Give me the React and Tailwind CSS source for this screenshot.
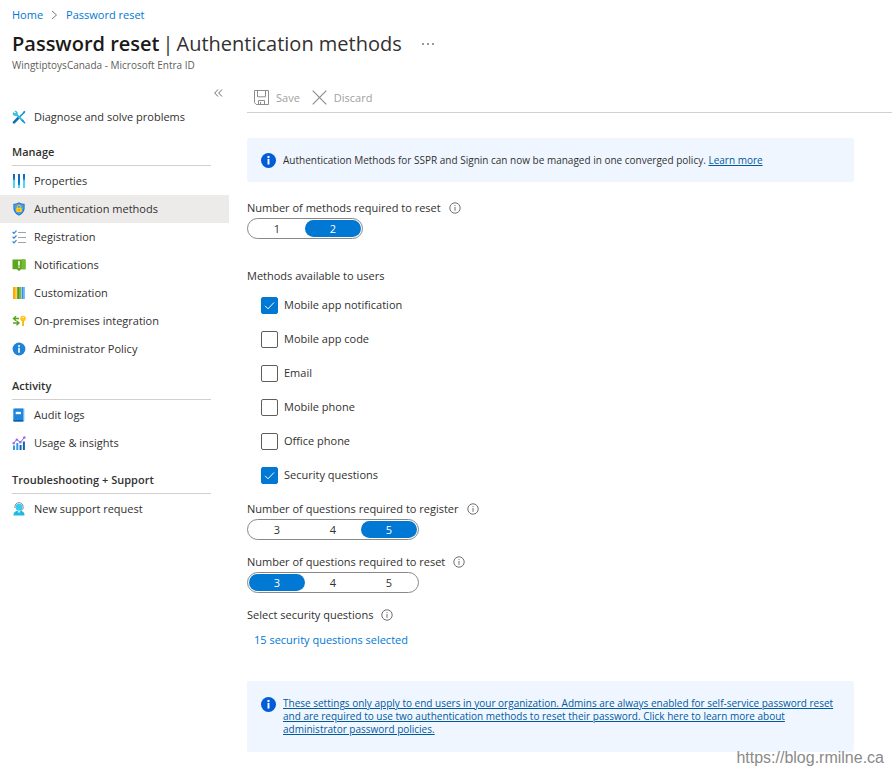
import React, { useState } from 'react';

const DiagnoseIcon = () => (
  <svg viewBox="0 0 14 14" className="size-[14px] shrink-0" fill="none">
    <path d="M12.4 2.2 6.9 7.6" stroke="#1b93c9" strokeWidth="1.5" strokeLinecap="round" />
    <path d="m11.4 1.6 2.1-1-.8 2.1-1 .7-1-1z" fill="#1b93c9" />
    <path d="M6.6 7.6 2 12.3" stroke="#0f6db5" strokeWidth="2.6" strokeLinecap="round" />
    <path d="m4.2 4.2 7.4 7.4" stroke="#32bedd" strokeWidth="2" />
    <path d="M1.3 1.9 3 3.5l.9-.9L2.4.9c1.500-.6 3.400.5 3.300 2.500 0 1.600-2.300 3.100-3.900 2.200C.6 4.900.6 3 1.300 1.900Z" fill="#32bedd" />
    <path d="m10.3 9.3 2.9 2.9c.6.7-.4 1.7-1.1 1.1l-2.900-2.900z" fill="#1490df" />
  </svg>
);

const PropertiesIcon = () => (
  <svg viewBox="0 0 14 14" className="size-[14px] shrink-0">
    <path d="M1 0h2v4H1zM6 0h2v9H6zM11 0h2v4h-2z" fill="#0f6cbd" />
    <path d="M1 5h2v9H1zM6 11h2v3H6zM11 5h2v9h-2z" fill="#50d5f5" />
    <path d="M1 4h2v2H1zM6 9h2v2H6zM11 4h2v2h-2z" fill="#1683d8" />
  </svg>
);

const ShieldIcon = () => (
  <svg viewBox="0 0 14 14" className="size-[14px] shrink-0">
    <path d="M7 .3c1.8 1.1 3.5 1.4 5.6 1.5v4.5c0 3.7-2.8 5.9-5.6 7.4-2.8-1.500-5.600-3.700-5.600-7.400V1.800C3.500 1.700 5.200 1.400 7 .3Z" fill="#1670c9" />
    <path d="M7 1.300c1.500.8 2.900 1.200 4.700 1.300v3.700c0 3.200-2.400 5.100-4.700 6.400-2.300-1.300-4.700-3.200-4.700-6.400V2.600c1.800-.1 3.200-.5 4.700-1.300Z" fill="#4a9deb" />
    <path d="M5.300 6V4.800a1.700 1.700 0 0 1 3.400 0V6" fill="none" stroke="#f5c518" strokeWidth="1" />
    <rect x="4.2" y="5.8" width="5.6" height="4.2" rx=".5" fill="#ffca1a" />
    <path d="M6.700 7h.6v1.700h-.6z" fill="#a67a00" />
  </svg>
);

const RegistrationIcon = () => (
  <svg viewBox="0 0 14 14" className="size-[14px] shrink-0" fill="none">
    <path d="M6 2.500h8M6 7.500h8M6 12.500h8" stroke="#a3a3a3" strokeWidth="1.2" />
    <path d="m.6 2 1.400 1.300L4.500.7M.6 6.800 2 8.100l2.500-2.600M.6 11.500 2 12.800l2.500-2.600" stroke="#2f86d6" strokeWidth="1.2" />
  </svg>
);

const NotificationsIcon = () => (
  <svg viewBox="0 0 14 14" className="size-[14px] shrink-0">
    <path d="M.5 1.500h13v9.800H8.900L7 13.300l-1.900-2H.5z" fill="#5ea51f" />
    <path d="M9.500 1.500h4v9.800h-4z" fill="#74bb2d" />
    <path d="M6.200 3h1.600v4.600H6.200zM6.200 8.400h1.600v1.400H6.200z" fill="#fff" />
  </svg>
);

const CustomizationIcon = () => (
  <svg viewBox="0 0 14 14" className="size-[14px] shrink-0">
    <path d="M1 1h3.500v12H1z" fill="#f8a90b" />
    <path d="M3 1h1.500v12H3z" fill="#ffc62b" />
    <path d="M5.200 1h3.500v12H5.200z" fill="#4c9919" />
    <path d="M7 1h1.700v12H7z" fill="#7cb82f" />
    <path d="M9.500 1H13v12H9.500z" fill="#3590e8" />
    <path d="M11.200 1H13v12h-1.800z" fill="#77bdf7" />
  </svg>
);

const IntegrationIcon = () => (
  <svg viewBox="0 0 14 14" className="size-[14px] shrink-0" fill="none">
    <path d="M7 4.500H2M4 2.200 1.500 4.500 4 6.800M1 9h5.500M4.500 6.800 7 9l-2.500 2.300" stroke="#59a51d" strokeWidth="1.4" />
    <circle cx="11" cy="4.600" r="2.800" fill="#ffc51c" />
    <path d="M10.200 6.500h1.700v4.800l-.8 1-.9-1z" fill="#f5b300" />
    <circle cx="11" cy="3.500" r=".7" fill="#fff" />
  </svg>
);

const PolicyIcon = () => (
  <svg viewBox="0 0 14 14" className="size-[14px] shrink-0">
    <circle cx="7" cy="7" r="6.400" fill="#1f83d8" />
    <circle cx="7" cy="3.900" r="1" fill="#fff" />
    <path d="M6.200 5.800h1.600v5H6.200z" fill="#fff" />
  </svg>
);

const AuditIcon = () => (
  <svg viewBox="0 0 14 14" className="size-[14px] shrink-0">
    <path d="M3 .5h9.500v12.300H3z" fill="#9bd0f7" />
    <path d="M1.300 1.500C1.300.9 1.800.5 2.400.5h8.900v13H2.400c-.6 0-1.100-.4-1.100-1z" fill="#1e86dc" />
    <path d="M1.300 12h10v1.500H2.400c-.6 0-1.100-.5-1.100-1.500Z" fill="#0f5fa8" />
    <path d="M3.700 3.800h5.200v2.400H3.700z" fill="#fff" />
  </svg>
);

const UsageIcon = () => (
  <svg viewBox="0 0 14 14" className="size-[14px] shrink-0" fill="none">
    <path d="M1 9.500h2V14H1zM4.300 7h2v7h-2z" fill="#2f9be8" />
    <path d="M7.600 9h2v5h-2zM10.900 5.500h2V14h-2z" fill="#1461b4" />
    <path d="m1.500 7.500 3.300-4 3.500 3 4-5" stroke="#8f57e0" strokeWidth="1" />
    <circle cx="1.700" cy="7.300" r="1.200" fill="#9d6bea" />
    <circle cx="4.900" cy="3.600" r="1.200" fill="#9d6bea" />
    <circle cx="8.300" cy="6.300" r="1.200" fill="#9d6bea" />
    <circle cx="12.400" cy="1.500" r="1.300" fill="#9d6bea" />
  </svg>
);

const SupportIcon = () => (
  <svg viewBox="0 0 14 14" className="size-[14px] shrink-0" fill="none">
    <path d="M1.500 13.500c0-3.200 1.500-4.700 5.500-4.700s5.500 1.500 5.500 4.700z" fill="#22b8e0" />
    <path d="M5.500 8.800h3L7 11.500z" fill="#c9f4ff" />
    <circle cx="7" cy="5.200" r="3.400" fill="#32cdf0" />
    <path d="M2.900 6V4.700C2.900 2.300 4.700.7 7 .7s4.100 1.600 4.100 4V6c0 1.500-1 2.200-2.600 2.400" stroke="#8a8a8a" strokeWidth="1" />
  </svg>
);

const InfoBadge = () => (
  <svg viewBox="0 0 14 14" className="size-[15px] shrink-0">
    <circle cx="7" cy="7" r="7" fill="#015cda" />
    <circle cx="7" cy="3.700" r="1.100" fill="#fff" />
    <path d="M6.100 5.600h1.800v5.200H6.100z" fill="#fff" />
  </svg>
);

const InfoOutline = () => (
  <svg viewBox="0 0 12 12" className="size-3 shrink-0" fill="none">
    <circle cx="6" cy="6" r="5.200" stroke="#605e5c" strokeWidth=".9" />
    <path d="M6 5v3.800M6 3.100v1" stroke="#605e5c" strokeWidth=".9" />
  </svg>
);

const SaveIcon = () => (
  <svg viewBox="0 0 15 15" className="size-[15px]" fill="none" stroke="#8f8d8b">
    <path d="M.5.5h14v14H2.300L.5 12.700z" />
    <path d="M3.500.5v6.300h8V.5M4.500 14.500v-4h6v4M6.500 12v2.500" />
  </svg>
);

const DiscardIcon = () => (
  <svg viewBox="0 0 15 15" className="size-[15px]" fill="none" stroke="#8f8d8b" strokeWidth="1.2">
    <path d="m.7.7 13.600 13.600M14.300.7.7 14.300" />
  </svg>
);

const sections = [
  {
    title: 'Manage',
    items: [
      { label: 'Properties', icon: PropertiesIcon },
      { label: 'Authentication methods', icon: ShieldIcon, active: true },
      { label: 'Registration', icon: RegistrationIcon },
      { label: 'Notifications', icon: NotificationsIcon },
      { label: 'Customization', icon: CustomizationIcon },
      { label: 'On-premises integration', icon: IntegrationIcon },
      { label: 'Administrator Policy', icon: PolicyIcon }
    ]
  },
  {
    title: 'Activity',
    items: [
      { label: 'Audit logs', icon: AuditIcon },
      { label: 'Usage & insights', icon: UsageIcon }
    ]
  },
  {
    title: 'Troubleshooting + Support',
    items: [{ label: 'New support request', icon: SupportIcon }]
  }
];

const initialMethods = [
  { id: 'app-notification', label: 'Mobile app notification', checked: true },
  { id: 'app-code', label: 'Mobile app code', checked: false },
  { id: 'email', label: 'Email', checked: false },
  { id: 'mobile-phone', label: 'Mobile phone', checked: false },
  { id: 'office-phone', label: 'Office phone', checked: false },
  { id: 'security-questions', label: 'Security questions', checked: true }
];

const NavItem = ({ item }) => {
  const Icon = item.icon;
  return (
    <a
      href="#"
      aria-current={item.active ? 'page' : undefined}
      className={`flex h-7 items-center gap-2 pl-3 ${item.active ? 'bg-[#edebe9]' : ''}`}
    >
      <Icon />
      {item.label}
    </a>
  );
};

const SegmentedControl = ({ name, label, options, value, onChange }) => (
  <fieldset>
    <legend className="flex h-5 items-center gap-2">
      {label}
      <InfoOutline />
    </legend>
    <div className="inline-flex h-[21px] items-center rounded-full border border-[#8a8886] px-px align-top">
      {options.map((option) => (
        <label
          key={option}
          className={`relative flex h-[17px] w-14 items-center justify-center rounded-full ${
            option === value ? 'bg-[#0078d4] text-white' : ''
          }`}
        >
          <input
            type="radio"
            name={name}
            className="sr-only"
            checked={option === value}
            onChange={() => onChange(option)}
          />
          {option}
        </label>
      ))}
    </div>
  </fieldset>
);

const Checkbox = ({ method, onToggle }) => (
  <label className="flex h-[34px] items-center gap-1.5">
    <span className="grid place-items-center">
      <input
        type="checkbox"
        checked={method.checked}
        onChange={() => onToggle(method.id)}
        className="col-start-1 row-start-1 size-[17px] appearance-none rounded-xs border border-[#605e5c] bg-white checked:border-[#0078d4] checked:bg-[#0078d4]"
      />
      {method.checked && (
        <svg viewBox="0 0 11 11" className="pointer-events-none col-start-1 row-start-1 size-[11px]" fill="none">
          <path d="m1 5.800 3 3L10 2.500" stroke="#fff" strokeWidth="1" />
        </svg>
      )}
    </span>
    {method.label}
  </label>
);

const App = () => {
  const [methods, setMethods] = useState(initialMethods);
  const [methodCount, setMethodCount] = useState(2);
  const [registerCount, setRegisterCount] = useState(5);
  const [resetCount, setResetCount] = useState(3);

  const toggleMethod = (id) => {
    setMethods((prev) => prev.map((m) => (m.id === id ? { ...m, checked: !m.checked } : m)));
  };

  return (
    <div className="relative min-h-screen bg-white font-['Open_Sans',sans-serif] text-[11px] leading-4 text-[#323130]">
      <header className="px-3 pt-[7px]">
        <nav aria-label="Breadcrumb" className="flex h-4 items-center gap-2 text-[#0078d4]">
          <a href="#">Home</a>
          <svg viewBox="0 0 7 10" className="h-2.5 w-[7px]" fill="none" stroke="#797775">
            <path d="m1 1 4.500 4L1 9" />
          </svg>
          <a href="#">Password reset</a>
        </nav>
        <div className="mt-[7px] flex h-7 items-center gap-5">
          <h1 className="flex gap-[3px] text-xl">
            <span className="font-semibold text-[#1b1a19]">Password reset</span>
            <span>|</span>
            <span>Authentication methods</span>
          </h1>
          <button type="button" aria-label="More actions" className="flex gap-[3px]">
            <span className="size-0.5 rounded-full bg-[#797775]" />
            <span className="size-0.5 rounded-full bg-[#797775]" />
            <span className="size-0.5 rounded-full bg-[#797775]" />
          </button>
        </div>
        <p className="text-[10px] leading-[14px] text-[#605e5c]">WingtiptoysCanada - Microsoft Entra ID</p>
      </header>

      <div className="flex items-start pt-[11px]">
        <aside className="w-[229px] shrink-0">
          <div className="flex h-5 items-center justify-end pr-1.5">
            <button type="button" aria-label="Collapse menu">
              <svg viewBox="0 0 9 8" className="h-2 w-[9px]" fill="none" stroke="#605e5c" strokeWidth=".9">
                <path d="M4 .5.700 4 4 7.500M8 .5 4.700 4 8 7.500" />
              </svg>
            </button>
          </div>
          <NavItem item={{ label: 'Diagnose and solve problems', icon: DiagnoseIcon }} />
          {sections.map((section) => (
            <section key={section.title} className="mb-[15px] first-of-type:mt-[13px]">
              <h2 className="mr-[18px] mb-px ml-3 border-b border-[#d2d0ce] pb-[5px] font-semibold">{section.title}</h2>
              {section.items.map((item) => (
                <NavItem key={item.label} item={item} />
              ))}
            </section>
          ))}
        </aside>

        <main className="ml-[18px] min-w-0 flex-1">
          <div className="flex h-[30px] items-center gap-3 border-b border-[#d2d0ce] pl-[7px] text-[#a19f9d]">
            <button type="button" disabled className="flex items-center gap-[7px]">
              <SaveIcon />
              Save
            </button>
            <button type="button" disabled className="flex items-center gap-[7px]">
              <DiscardIcon />
              Discard
            </button>
          </div>

          <div className="mr-[38px] pt-[25px]">
            <div className="flex h-11 items-center gap-[7px] rounded-xs bg-[#f0f6ff] px-3.5 text-[10px]">
              <InfoBadge />
              <p>
                Authentication Methods for SSPR and Signin can now be managed in one converged policy.{' '}
                <a href="#" className="text-[#005a9e] underline">
                  Learn more
                </a>
              </p>
            </div>

            <div className="mt-4">
              <SegmentedControl
                name="method-count"
                label="Number of methods required to reset"
                options={[1, 2]}
                value={methodCount}
                onChange={setMethodCount}
              />
            </div>

            <fieldset className="mt-[29px]">
              <legend className="h-5">Methods available to users</legend>
              <div className="pl-3.5">
                {methods.map((method) => (
                  <Checkbox key={method.id} method={method} onToggle={toggleMethod} />
                ))}
              </div>
            </fieldset>

            <div className="mt-[7px] flex flex-col gap-3">
              <SegmentedControl
                name="register-count"
                label="Number of questions required to register"
                options={[3, 4, 5]}
                value={registerCount}
                onChange={setRegisterCount}
              />
              <SegmentedControl
                name="reset-count"
                label="Number of questions required to reset"
                options={[3, 4, 5]}
                value={resetCount}
                onChange={setResetCount}
              />
              <div>
                <div className="flex h-5 items-center gap-2">
                  Select security questions
                  <InfoOutline />
                </div>
                <a href="#" className="mt-[7px] ml-[7px] inline-block text-[#0078d4]">
                  15 security questions selected
                </a>
              </div>
            </div>

            <div className="mt-[33px] flex items-start gap-[7px] rounded-xs bg-[#f0f6ff] px-3.5 py-4 text-[10px] leading-[13px]">
              <InfoBadge />
              <a href="#" className="text-[#005a9e] underline">
                These settings only apply to end users in your organization. Admins are always enabled for self-service
                password reset and are required to use two authentication methods to reset their password. Click here to
                learn more about administrator password policies.
              </a>
            </div>
          </div>
        </main>
      </div>

      <p className="absolute right-2 bottom-0 font-['Liberation_Sans',sans-serif] text-base leading-5 text-[#8a8a8a] [text-shadow:1px_1px_0_#fff]">
        https://blog.rmilne.ca
      </p>
    </div>
  );
};

export default App;
